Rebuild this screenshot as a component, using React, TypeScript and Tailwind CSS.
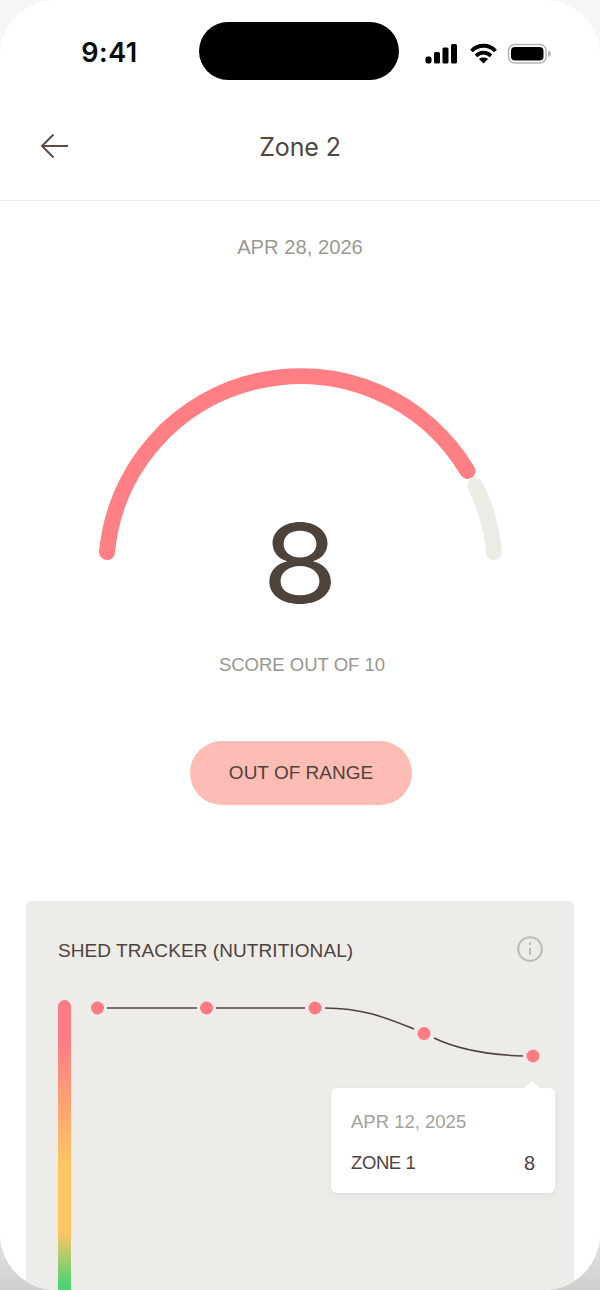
export default function App() {
  const dots: [number, number][] = [[13.5, 8], [122.5, 8], [231, 8], [340, 33.5], [449, 56]];
  return (
    <div className="w-[600px] h-[1290px] overflow-hidden bg-[linear-gradient(180deg,#f7f7f7_0%,#f7f7f7_92%,#cfcfcf_100%)] font-['Liberation_Sans',Arial,sans-serif]">
      <div className="w-[600px] h-[1290px] overflow-hidden rounded-[56px] bg-white flex flex-col">
        {/* status bar */}
        <div className="h-[100px] shrink-0 flex items-start pt-[22px]">
          <div className="w-[199px] h-[62px] flex items-center justify-center pl-[20px] font-['Inter',sans-serif] text-[27px] font-semibold text-[#0a0a0a] tracking-[0.5px]">
            9:41
          </div>
          <div className="w-[200px] h-[58px] rounded-full bg-black" />
          <div className="flex-1 h-[58px] flex items-center">
            <svg width="201" height="58" viewBox="0 0 201 58" fill="none">
              <rect x="26.5" y="34.5" width="6" height="7" rx="2" fill="#000" />
              <rect x="35" y="30" width="6" height="11.5" rx="1.5" fill="#000" />
              <rect x="43.5" y="25.5" width="6" height="16" rx="1.5" fill="#000" />
              <rect x="52" y="22" width="6" height="19.5" rx="1.5" fill="#000" />
              <path d="M72.5 29C79 22 90 22 96.5 29" stroke="#000" strokeWidth="3.8" />
              <path d="M77 33.8C81.5 29.6 87.5 29.6 92 33.8" stroke="#000" strokeWidth="3.8" />
              <path d="M84.5 41.5L80 37C82.2 35 86.8 35 89 37Z" fill="#000" />
              <rect x="109.5" y="22.5" width="37.5" height="18.5" rx="6" stroke="#b5b5b5" strokeWidth="1.5" />
              <rect x="112" y="25" width="32.5" height="13.5" rx="4" fill="#000" />
              <path d="M149 28.5C151 29 152 30.5 152 31.7C152 33 151 34.5 149 35Z" fill="#bdbdbd" />
            </svg>
          </div>
        </div>

        {/* header */}
        <div className="h-[101px] shrink-0 border-b border-[#ececec] relative flex items-center justify-center pb-[7px]">
          <svg className="absolute left-[40px] top-[33px]" width="30" height="26" viewBox="0 0 30 26" fill="none" stroke="#5a4f47" strokeWidth="2">
            <path d="M28 13H2" />
            <path d="M13.5 1.5L2 13L13.5 24.5" />
          </svg>
          <span className="font-['Inter',sans-serif] text-[25px] leading-[32px] text-[#4f4640] tracking-[-0.1px]">Zone 2</span>
        </div>

        {/* date */}
        <div className="mt-[34px] shrink-0 text-center text-[20.2px] leading-[24px] text-[#9b9893]">APR 28, 2026</div>

        {/* gauge */}
        <div className="relative mt-[109px] h-[200px] shrink-0 flex justify-center">
          <svg width="600" height="200" viewBox="0 0 600 200" fill="none" strokeWidth="16" strokeLinecap="round">
            <path d="M107 184A194.4 194.4 0 0 1 467.5 103" stroke="#ff7f85" />
            <path d="M475.5 117.7A194.4 194.4 0 0 1 494 184" stroke="#ecece7" />
          </svg>
          <div className="absolute left-0 right-0 top-[135px] text-center font-['Inter',sans-serif] text-[110px] leading-[120px] font-[370] text-[#4d433b] scale-x-[1.12]">8</div>
        </div>

        {/* score */}
        <div className="mt-[85px] shrink-0 pl-[4px] text-center text-[18.5px] leading-[24px] text-[#98968f]">SCORE OUT OF 10</div>

        {/* pill */}
        <div className="mt-[64px] shrink-0 ml-[190px] w-[222px] h-[64px] rounded-full bg-[#fdbdb5] flex items-center justify-center text-[19px] text-[#4d433b]">
          OUT OF RANGE
        </div>

        {/* card */}
        <div className="mt-[96px] mx-[26px] flex-1 rounded-t-[5px] bg-[#eeece8] pt-[35px] px-[32px] relative">
          <div className="flex items-center justify-between h-[28px]">
            <span className="mt-[2px] text-[19px] leading-[28px] tracking-[0.08px] text-[#4d433b]">SHED TRACKER (NUTRITIONAL)</span>
            <svg className="mr-[-1px] mt-[-2px]" width="26" height="26" viewBox="0 0 26 26" fill="none" stroke="#bab9b5" strokeWidth="2">
              <circle cx="13" cy="13" r="11.8" />
              <path d="M13 12V19" />
              <circle cx="13" cy="7.7" r="1.2" fill="#bab9b5" stroke="none" />
            </svg>
          </div>
          <div className="mt-[36px] flex gap-[13px]">
            <div className="w-[13px] h-[320px] shrink-0 rounded-full bg-[linear-gradient(180deg,#ff7c85_0,#ff7c85_40px,#ffc662_165px,#ffc662_232px,#4fd373_285px)]" />
            <svg width="470" height="70" viewBox="0 0 470 70" fill="none" className="shrink-0">
              <path d="M23 8H113M132 8H221M241 8C280 8 305 19 330 29M350 38C375 50 410 55 439 56" stroke="#4d433b" strokeWidth="1.5" />
              {dots.map(([x, y]) => (
                <circle key={x} cx={x} cy={y} r="6.5" fill="#ff7a82" />
              ))}
            </svg>
          </div>
          {/* tooltip */}
          <div className="absolute left-[305px] top-[187px] w-[224px] h-[105px] rounded-[6px] bg-white shadow-[0_2px_6px_rgba(0,0,0,0.06)] px-[20px] pt-[21px]">
            <div className="absolute right-[15px] top-[-7px] w-0 h-0 border-x-[8px] border-x-transparent border-b-[7px] border-b-white" />
            <div className="text-[18.5px] leading-[26px] text-[#a3a19c]">APR 12, 2025</div>
            <div className="mt-[15px] flex justify-between text-[18.5px] leading-[26px] text-[#4d433b]">
              <span className="tracking-[-0.4px]">ZONE 1</span>
              <span className="text-[20px]">8</span>
            </div>
          </div>
        </div>
      </div>
    </div>
  );
}
